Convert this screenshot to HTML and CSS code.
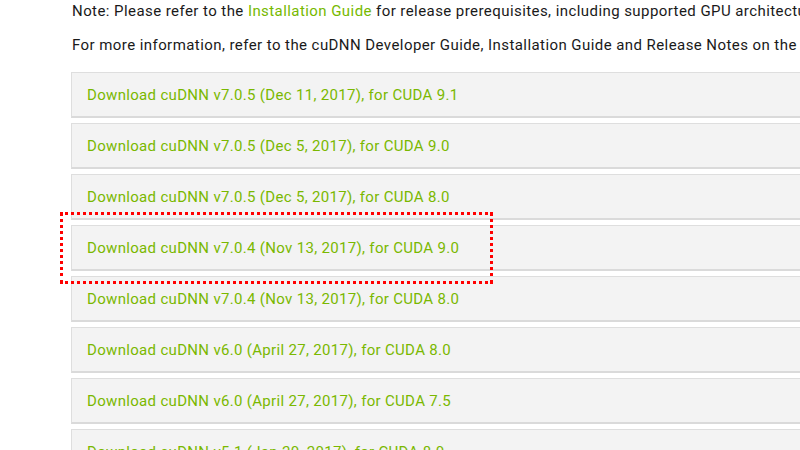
FILE: index.html
```html
<!DOCTYPE html>
<html>
<head>
<meta charset="utf-8">
<link rel="stylesheet" href="styles.css">
</head>
<body>
<div class="page">
  <p class="note">Note: Please refer to the <a class="link" href="#">Installation Guide</a> for release prerequisites, including supported GPU architectures.</p>
  <p class="note">For more information, refer to the cuDNN Developer Guide, Installation Guide and Release Notes on the Deep Learning SDK page.</p>
  <ul class="downloads">
    <li class="item"><a href="#">Download cuDNN v7.0.5 (Dec 11, 2017), for CUDA 9.1</a></li>
    <li class="item"><a href="#">Download cuDNN v7.0.5 (Dec 5, 2017), for CUDA 9.0</a></li>
    <li class="item"><a href="#">Download cuDNN v7.0.5 (Dec 5, 2017), for CUDA 8.0</a></li>
    <li class="item item-marked"><a href="#">Download cuDNN v7.0.4 (Nov 13, 2017), for CUDA 9.0</a></li>
    <li class="item"><a href="#">Download cuDNN v7.0.4 (Nov 13, 2017), for CUDA 8.0</a></li>
    <li class="item"><a href="#">Download cuDNN v6.0 (April 27, 2017), for CUDA 8.0</a></li>
    <li class="item"><a href="#">Download cuDNN v6.0 (April 27, 2017), for CUDA 7.5</a></li>
    <li class="item"><a href="#">Download cuDNN v5.1 (Jan 20, 2017), for CUDA 8.0</a></li>
  </ul>
</div>
</body>
</html>
```
FILE: styles.css
```css
html, body {
  margin: 0;
  padding: 0;
  background: #fff;
  overflow: hidden;
  width: 800px;
  height: 450px;
}
.page {
  font-family: Roboto, "Liberation Sans", sans-serif;
  font-size: 15px;
  letter-spacing: 0.32px;
  color: #1a1a1a;
  padding-left: 72px;
  padding-top: 0;
}
.note {
  margin: 0;
  white-space: nowrap;
  line-height: 23px;
  height: 34px;
  letter-spacing: 0.43px;
}
.link {
  color: #76b900;
  text-decoration: none;
}
.downloads {
  list-style: none;
  margin: 4px 0 0 -1px;
  padding: 0;
  display: flex;
  flex-direction: column;
  gap: 5px;
  width: 800px;
}
.item {
  box-sizing: border-box;
  height: 46px;
  background: #f3f3f3;
  border: 1px solid #dedede;
  border-bottom: 2px solid #dadada;
  display: flex;
  align-items: center;
  padding-left: 15px;
  white-space: nowrap;
}
.item a {
  color: #7ab800;
  text-decoration: none;
}
.item-marked {
  position: relative;
}
.item-marked::after {
  content: "";
  position: absolute;
  left: -12px;
  top: -14px;
  width: 427px;
  height: 66px;
  border: 3px dotted #f00;
  pointer-events: none;
}
```
